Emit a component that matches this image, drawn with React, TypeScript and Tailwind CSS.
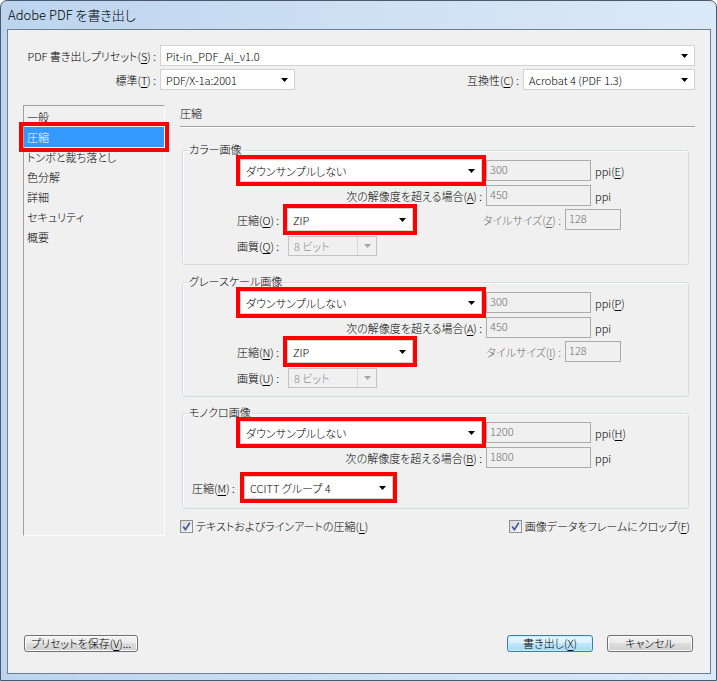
import React from 'react';
import clsx from 'clsx';

// underlined mnemonic letter, e.g. (S)
const Key: React.FC<{ k: string }> = ({ k }) => <span className="underline underline-offset-[2px]">{k}</span>;

const Arrow: React.FC<{ disabled?: boolean }> = ({ disabled }) => (
  <svg width="7" height="4" viewBox="0 0 7 4" className="shrink-0">
    <path d="M0 0h7L3.5 4z" fill={disabled ? '#a6a6a6' : '#000'} />
  </svg>
);

const Combo: React.FC<{ value: string; className?: string; disabled?: boolean }> = ({ value, className, disabled }) => {
  if (disabled) {
    return (
      <div className={clsx('flex items-stretch border border-[#c3c3c3] text-[#8a8a8a]', className)}>
        <span className="flex flex-1 items-center truncate pl-[5px]">{value}</span>
        <span className="flex w-[19px] items-center justify-center border-l border-[#d6d6d6]">
          <Arrow disabled />
        </span>
      </div>
    );
  }
  return (
    <div className={clsx('flex items-center justify-between border border-[#d2d2d2] bg-white pl-[5px] pr-[6px]', className)}>
      <span className="truncate">{value}</span>
      <Arrow />
    </div>
  );
};

// red highlight drawn round a control, takes no room in the layout
const Mark: React.FC<{ children: React.ReactNode }> = ({ children }) => (
  <div className="-m-[4px] border-4 border-[#ff0000]">{children}</div>
);

const Field: React.FC<{ value: string; className?: string }> = ({ value, className }) => (
  <div className={clsx('border border-[#ababab] pl-[3px] pt-[2px] leading-[13px] text-[#6d6d6d]', className)}>{value}</div>
);

const Group: React.FC<{ title: string; className?: string; children: React.ReactNode }> = ({ title, className, children }) => (
  <div className={clsx('ml-[2px] mr-[6px] rounded-[3px] border border-[#d5dbe0] shadow-[inset_1px_1px_0_#fff]', className)}>
    <div className="-mt-[9px] ml-[5px] w-fit bg-[#f0f0f0] px-[1px] leading-[14px]">{title}</div>
    {children}
  </div>
);

const Check: React.FC = () => (
  <span className="flex h-[13px] w-[13px] shrink-0 items-center justify-center border border-[#8e8f8f] bg-[linear-gradient(135deg,#d8d8d8,#f7f7f7)]">
    <svg width="9" height="9" viewBox="0 0 9 9">
      <path d="M1.2 4.6 L3.4 7.6 L7.8 0.8" stroke="#3d5a9e" strokeWidth="1.7" fill="none" />
    </svg>
  </span>
);

const Btn: React.FC<{ children: React.ReactNode; className?: string; primary?: boolean }> = ({ children, className, primary }) => (
  <button
    className={clsx(
      'flex items-center justify-center rounded-[3px] border leading-none',
      primary
        ? 'border-[#3c7fb1] bg-[linear-gradient(#eaf6fd_0%,#d9f0fc_50%,#bee6fd_50%,#a7d9f5_100%)] shadow-[inset_0_0_0_1px_#c4ecfd]'
        : 'border-[#707070] bg-[linear-gradient(#f2f2f2_0%,#ebebeb_50%,#dddddd_50%,#cfcfcf_100%)] shadow-[inset_0_0_0_1px_#fbfbfb]',
      className
    )}
  >
    {children}
  </button>
);

const ResolutionRows: React.FC<{ ppiKey: string; overKey: string; ppi: string; over: string }> = ({ ppiKey, overKey, ppi, over }) => (
  <>
    <div className="flex h-[23px] items-center pl-[57px]">
      <Mark>
        <Combo value="ダウンサンプルしない" className="h-[23px] w-[242px]" />
      </Mark>
      <Field value={ppi} className="ml-[4px] h-[21px] w-[105px]" />
      <span className="ml-[4px]">ppi(<Key k={ppiKey} />)</span>
    </div>
    <div className="mt-[3px] flex h-[21px] items-center">
      <span className="w-[299px] text-right">次の解像度を超える場合(<Key k={overKey} />) :</span>
      <Field value={over} className="ml-[4px] h-[21px] w-[105px]" />
      <span className="ml-[4px]">ppi</span>
    </div>
  </>
);

const ImageGroup: React.FC<{ title: string; keys: string[]; className?: string }> = ({ title, keys, className }) => (
  <Group title={title} className={clsx('pb-[8px]', className)}>
    <div className="mt-[3px]">
      <ResolutionRows ppiKey={keys[0]} overKey="A" ppi="300" over="450" />
    </div>
    <div className="mt-[2px] flex h-[23px] items-center pl-[54px]">
      <span className="w-[46px]">圧縮(<Key k={keys[1]} />) :</span>
      <div className="ml-[4px]">
        <Mark>
          <Combo value="ZIP" className="h-[23px] w-[126px]" />
        </Mark>
      </div>
      <span className="w-[148px] text-right text-[#6d6d6d]">タイルサイズ(<Key k={keys[2]} />) :</span>
      <Field value="128" className="ml-[4px] h-[21px] w-[56px]" />
    </div>
    <div className="mt-[5px] flex h-[20px] items-center pl-[54px]">
      <span className="w-[46px]">画質(<Key k={keys[3]} />) :</span>
      <Combo value="8 ビット" disabled className="ml-[5px] h-[20px] w-[89px]" />
    </div>
  </Group>
);

const sections = ['一般', '圧縮', 'トンボと裁ち落とし', '色分解', '詳細', 'セキュリティ', '概要'];

export default function App() {
  return (
    <div className="flex h-[681px] w-[717px] flex-col overflow-hidden rounded-t-[7px] border border-[#4a5a6c] bg-[linear-gradient(to_right,#bcd4ee,#cfe1f4_55%,#dbe9f7)] text-[11px] font-light leading-[14px] text-black [font-family:'Noto_Sans_CJK_JP',sans-serif] [font-feature-settings:'palt']">
      <div className="flex h-[28px] shrink-0 items-center pl-[7px] text-[13px]">Adobe PDF を書き出し</div>

      <div className="ml-[6px] mr-[5px] flex h-[645px] flex-col border border-[#6f7f91] bg-[#f0f0f0] px-[15px] pb-[21px] pt-[15px]">
        <div className="flex h-[21px] items-center">
          <span className="w-[133px] text-right">PDF 書き出しプリセット(<Key k="S" />) :</span>
          <Combo value="Pit-in_PDF_Ai_v1.0" className="ml-[4px] h-[21px] flex-1 pl-[4px] pr-[4px]" />
        </div>
        <div className="mt-[3px] flex h-[21px] items-center">
          <span className="w-[133px] text-right">標準(<Key k="T" />) :</span>
          <Combo value="PDF/X-1a:2001" className="ml-[4px] h-[21px] w-[135px] pl-[4px]" />
          <span className="flex-1 text-right">互換性(<Key k="C" />) :</span>
          <Combo value="Acrobat 4 (PDF 1.3)" className="ml-[4px] h-[21px] w-[172px] pl-[4px] pr-[4px]" />
        </div>

        <div className="mt-[15px] flex gap-[15px]">
          <div className="h-[431px] w-[142px] shrink-0 border border-b-white border-l-[#a0a0a0] border-r-white border-t-[#a0a0a0] pt-[1px]">
            {sections.map(s =>
              s === '圧縮' ? (
                <div key={s} className="relative -mx-[5px] -my-[5px] border-4 border-[#ff0000] p-[1px]">
                  <div className="h-[20px] bg-[#3399ff] pl-[3px] leading-[20px] text-white">{s}</div>
                </div>
              ) : (
                <div key={s} className="h-[20px] pl-[3px] leading-[20px]">{s}</div>
              )
            )}
          </div>

          <div className="flex-1">
            <div className="border-b border-[#a0a0a0] pb-[4px] leading-[17px] shadow-[0_1px_0_#fff]">圧縮</div>

            <ImageGroup title="カラー画像" keys={['E', 'O', 'Z', 'Q']} className="mt-[23px]" />
            <ImageGroup title="グレースケール画像" keys={['P', 'N', 'I', 'U']} className="mt-[17px]" />

            <Group title="モノクロ画像" className="mt-[16px] pb-[9px]">
              <div className="mt-[2px]">
                <div className="flex h-[23px] items-center pl-[57px]">
                  <Mark>
                    <Combo value="ダウンサンプルしない" className="h-[23px] w-[242px]" />
                  </Mark>
                  <Field value="1200" className="ml-[4px] h-[21px] w-[105px]" />
                  <span className="ml-[4px]">ppi(<Key k="H" />)</span>
                </div>
                <div className="mt-[3px] flex h-[21px] items-center">
                  <span className="w-[299px] text-right">次の解像度を超える場合(<Key k="B" />) :</span>
                  <Field value="1800" className="ml-[4px] h-[21px] w-[105px]" />
                  <span className="ml-[4px]">ppi</span>
                </div>
              </div>
              <div className="mt-[8px] flex h-[23px] items-center pl-[9px]">
                <span className="w-[48px]">圧縮(<Key k="M" />) :</span>
                <div className="ml-[4px]">
                  <Mark>
                    <Combo value="CCITT グループ 4" className="h-[23px] w-[149px]" />
                  </Mark>
                </div>
              </div>
            </Group>

            <div className="mt-[10px] flex items-center justify-between pr-[5px]">
              <label className="flex items-center gap-[3px]">
                <Check />
                <span>テキストおよびラインアートの圧縮(<Key k="L" />)</span>
              </label>
              <label className="flex items-center gap-[3px]">
                <Check />
                <span>画像データをフレームにクロップ(<Key k="F" />)</span>
              </label>
            </div>
          </div>
        </div>

        <div className="mt-auto flex items-center">
          <Btn className="ml-[1px] h-[17px] w-[114px]">プリセットを保存(<Key k="V" />)...</Btn>
          <div className="ml-auto mr-[2px] flex gap-[14px]">
            <Btn primary className="h-[17px] w-[86px]">書き出し(<Key k="X" />)</Btn>
            <Btn className="h-[17px] w-[86px]">キャンセル</Btn>
          </div>
        </div>
      </div>
    </div>
  );
}
